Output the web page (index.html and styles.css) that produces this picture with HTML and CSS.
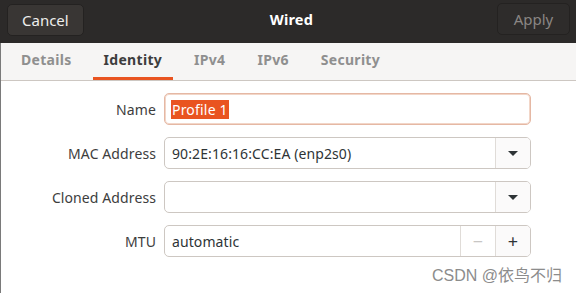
FILE: index.html
```html
<!DOCTYPE html>
<html>
<head>
    <title>Wired</title>
    <link rel="stylesheet" href="styles.css">
</head>
<body>
    <div class="dialog">
        <!-- Header bar -->
        <div class="header">
            <button class="hbtn">Cancel</button>
            <div class="title">Wired</div>
            <button class="hbtn disabled">Apply</button>
        </div>

        <!-- Tabs -->
        <div class="tabs">
            <span class="tab">Details</span>
            <span class="tab active">Identity</span>
            <span class="tab">IPv4</span>
            <span class="tab">IPv6</span>
            <span class="tab">Security</span>
        </div>

        <!-- Form -->
        <div class="form">
            <label class="lbl">Name</label>
            <div class="field focus"><span class="sel">Profile 1</span></div>

            <label class="lbl">MAC Address</label>
            <div class="field combo">
                <span class="text">90:2E:16:16:CC:EA (enp2s0)</span>
                <span class="side"><span class="arrow"></span></span>
            </div>

            <label class="lbl">Cloned Address</label>
            <div class="field combo">
                <span class="text"></span>
                <span class="side"><span class="arrow"></span></span>
            </div>

            <label class="lbl">MTU</label>
            <div class="field combo">
                <span class="text">automatic</span>
                <span class="side minus">&minus;</span>
                <span class="side plus">+</span>
            </div>
        </div>

        <div class="mark">CSDN @依鸟不归</div>
    </div>
</body>
</html>
```

FILE: styles.css
```css
* { margin: 0; padding: 0; box-sizing: border-box; }
body { font: 14px "Noto Sans", "DejaVu Sans", sans-serif; background: #fff; color: #3d3d3d; width: 576px; height: 293px; overflow: hidden; }
.dialog { height: 293px; display: flex; flex-direction: column; border-left: 1px solid #7a7a7a; }
.header { height: 43px; background: #2c2a29; display: flex; align-items: center; justify-content: space-between; padding: 0 6px 0 7px; margin-left: -1px; }
.hbtn { font: 15px "Noto Sans", sans-serif; height: 32px; padding: 0 14px; background: #393634; color: #eeeeec; border: 1px solid #242221; border-radius: 5px; margin-top: -4px; }
.hbtn.disabled { color: #8a8683; background: #2e2c2b; border-color: #242221; width: 73px; margin-top: -6px; }
.title { color: #fff; font-weight: bold; font-size: 14.5px; margin-top: -6px; margin-left: 2px; letter-spacing: 0.2px; }
.tabs { height: 38px; background: #f6f5f4; border-bottom: 1px solid #cdc7c2; display: flex; padding-left: 9px; }
.tab { font-weight: bold; font-size: 14px; letter-spacing: 0.3px; color: #8f8f8f; padding: 0 11px; margin-right: 10px; display: flex; align-items: center; padding-bottom: 1px; border-bottom: 3px solid transparent; }
.tab.active { color: #3d3d3d; border-bottom-color: #e95420; }
.form { display: grid; grid-template-columns: 155px 367px; column-gap: 8px; row-gap: 12px; padding-top: 12px; align-items: center; }
.lbl { text-align: right; color: #3d3d3d; font-size: 14px; letter-spacing: 0.1px; }
.field { height: 32px; border: 1px solid #cdc7c2; border-radius: 5px; background: #fff; display: flex; align-items: center; padding-left: 6px; color: #2e3436; font-size: 14px; }
.field.focus { border-color: #e5b8a4; box-shadow: inset 0 0 0 1px #f2d6c8; }
.sel { background: #e95420; color: #fff; padding: 0 1px; line-height: 19px; letter-spacing: 0.2px; }
.combo { padding-left: 0; }
.combo .text { flex: 1; padding-left: 7px; letter-spacing: 0.1px; }
.side { width: 35px; height: 100%; border-left: 1px solid #e0dcd8; display: flex; align-items: center; justify-content: center; background: #fbfafa; font-size: 18px; color: #2e3436; }
.side:last-child { border-radius: 0 4px 4px 0; }
.minus { color: #c8c6c4; background: #fff; }
.arrow { width: 0; height: 0; border-left: 5px solid transparent; border-right: 5px solid transparent; border-top: 5px solid #2e3436; }
.mark { align-self: flex-end; margin: 5px 14px 0 0; font: 16px "Liberation Sans", "Noto Sans CJK SC", sans-serif; color: #8c8c8c; }
```
